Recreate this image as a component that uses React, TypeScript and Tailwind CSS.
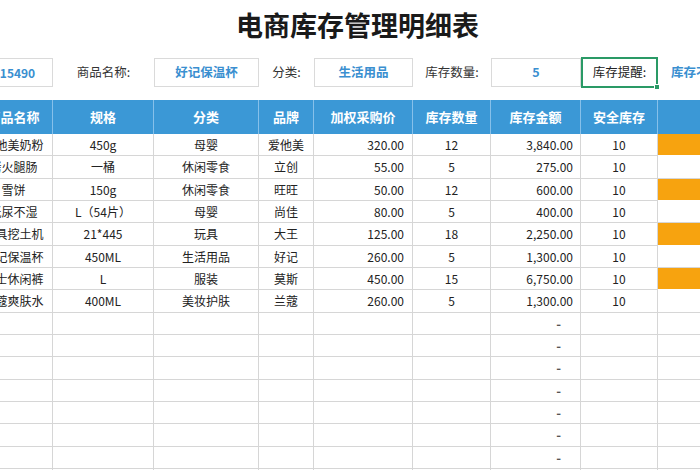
import React from "react";

const cols = "grid grid-cols-[78px_101px_105px_55px_99px_78px_90px_77px_82px]";

type Row = {
  name: string;
  spec: string;
  cat: string;
  brand: string;
  price: string;
  qty: string;
  amount: string;
  safe: string;
  warn: boolean;
};

const rows: Row[] = [
  { name: "爱他美奶粉", spec: "450g", cat: "母婴", brand: "爱他美", price: "320.00", qty: "12", amount: "3,840.00", safe: "10", warn: true },
  { name: "烤火腿肠", spec: "一桶", cat: "休闲零食", brand: "立创", price: "55.00", qty: "5", amount: "275.00", safe: "10", warn: false },
  { name: "雪饼", spec: "150g", cat: "休闲零食", brand: "旺旺", price: "50.00", qty: "12", amount: "600.00", safe: "10", warn: true },
  { name: "纸尿不湿", spec: "L（54片）", cat: "母婴", brand: "尚佳", price: "80.00", qty: "5", amount: "400.00", safe: "10", warn: false },
  { name: "玩具挖土机", spec: "21*445", cat: "玩具", brand: "大王", price: "125.00", qty: "18", amount: "2,250.00", safe: "10", warn: true },
  { name: "好记保温杯", spec: "450ML", cat: "生活用品", brand: "好记", price: "260.00", qty: "5", amount: "1,300.00", safe: "10", warn: false },
  { name: "男士休闲裤", spec: "L", cat: "服装", brand: "莫斯", price: "450.00", qty: "15", amount: "6,750.00", safe: "10", warn: true },
  { name: "兰蔻爽肤水", spec: "400ML", cat: "美妆护肤", brand: "兰蔻", price: "260.00", qty: "5", amount: "1,300.00", safe: "10", warn: false },
];

const font = { fontFamily: '"Noto Sans CJK SC", "Noto Sans", sans-serif' };

function heightClass(i: number) {
  return i % 3 === 1 ? "h-[23px]" : "h-[22px]";
}

export default function App() {
  const blanks = Array.from({ length: 8 }, (_, i) => i);
  return (
    <div className="w-[700px] h-[470px] overflow-hidden bg-white text-[#222]" style={font}>
      <div className="w-[765px] -ml-[25px] flex flex-col">
        {/* Title */}
        <div className="h-[48px] flex items-center justify-center">
          <span className="text-[27px] leading-none font-bold text-[#1a1a1a]">电商库存管理明细表</span>
        </div>

        {/* Filter row */}
        <div className={`${cols} h-[31px] mt-[9px]`}>
          <div className="my-[1px] border-y border-r border-[#dadada] flex items-center justify-center pl-[8px] text-[12px] font-semibold text-[#3a8fd0]">15490</div>
          <div className="flex items-center justify-center text-[12.5px] text-[#333]">商品名称:</div>
          <div className="my-[1px] border border-[#dadada] flex items-center justify-center text-[12.5px] font-semibold text-[#3a8fd0]">好记保温杯</div>
          <div className="flex items-center justify-center text-[12.5px] text-[#333]">分类:</div>
          <div className="my-[1px] border border-[#dadada] flex items-center justify-center text-[12.5px] font-semibold text-[#3a8fd0]">生活用品</div>
          <div className="flex items-center justify-center text-[12.5px] text-[#333]">库存数量:</div>
          <div className="my-[1px] border border-[#dadada] flex items-center justify-center text-[12.5px] font-semibold text-[#3a8fd0]">5</div>
          <div className="relative border-2 border-[#2a9a66] flex items-center justify-center text-[12.5px] text-[#222]">
            库存提醒:
            <span className="absolute -right-[4px] -bottom-[4px] w-[6px] h-[6px] bg-[#2a9a66] border border-white"></span>
          </div>
          <div className="flex items-center justify-center pr-[6px] text-[12.5px] font-semibold text-[#3a8fd0]">库存不足</div>
        </div>

        {/* Header */}
        <div className={`${cols} h-[34px] mt-[12px] bg-[#3b98d6] text-white text-[13px] font-bold`}>
          {["商品名称", "规格", "分类", "品牌", "加权采购价", "库存数量", "库存金额", "安全库存", ""].map((h, i) => (
            <div key={i} className={`flex items-center justify-center ${i < 8 ? "border-r border-[#86c0ea]" : ""}`}>
              {h}
            </div>
          ))}
        </div>

        {/* Data rows */}
        {rows.map((r, i) => (
          <div key={i} className={`${cols} ${heightClass(i)} text-[12px] text-[#222]`}>
            <div className="border-r border-b border-[#d6d6d6] flex items-center justify-center whitespace-nowrap">{r.name}</div>
            <div className="border-r border-b border-[#d6d6d6] flex items-center justify-center">{r.spec}</div>
            <div className="border-r border-b border-[#d6d6d6] flex items-center justify-center">{r.cat}</div>
            <div className="border-r border-b border-[#d6d6d6] flex items-center justify-center">{r.brand}</div>
            <div className="border-r border-b border-[#d6d6d6] flex items-center justify-end pr-[8px]">{r.price}</div>
            <div className="border-r border-b border-[#d6d6d6] flex items-center justify-center">{r.qty}</div>
            <div className="border-r border-b border-[#d6d6d6] flex items-center justify-end pr-[7px]">{r.amount}</div>
            <div className="border-r border-b border-[#d6d6d6] flex items-center justify-center">{r.safe}</div>
            <div className={`border-b ${r.warn ? "bg-[#f7a30f] border-white" : "border-[#d6d6d6]"}`}></div>
          </div>
        ))}

        {/* Blank rows */}
        {blanks.map((b) => (
          <div key={b} className={`${cols} ${heightClass(b + 8)} text-[13px] text-[#555]`}>
            <div className="border-r border-b border-[#d6d6d6]"></div>
            <div className="border-r border-b border-[#d6d6d6]"></div>
            <div className="border-r border-b border-[#d6d6d6]"></div>
            <div className="border-r border-b border-[#d6d6d6]"></div>
            <div className="border-r border-b border-[#d6d6d6]"></div>
            <div className="border-r border-b border-[#d6d6d6]"></div>
            <div className="border-r border-b border-[#d6d6d6] flex items-center justify-end pr-[19px] font-bold">-</div>
            <div className="border-r border-b border-[#d6d6d6]"></div>
            <div className="border-b border-[#d6d6d6]"></div>
          </div>
        ))}
      </div>
    </div>
  );
}
